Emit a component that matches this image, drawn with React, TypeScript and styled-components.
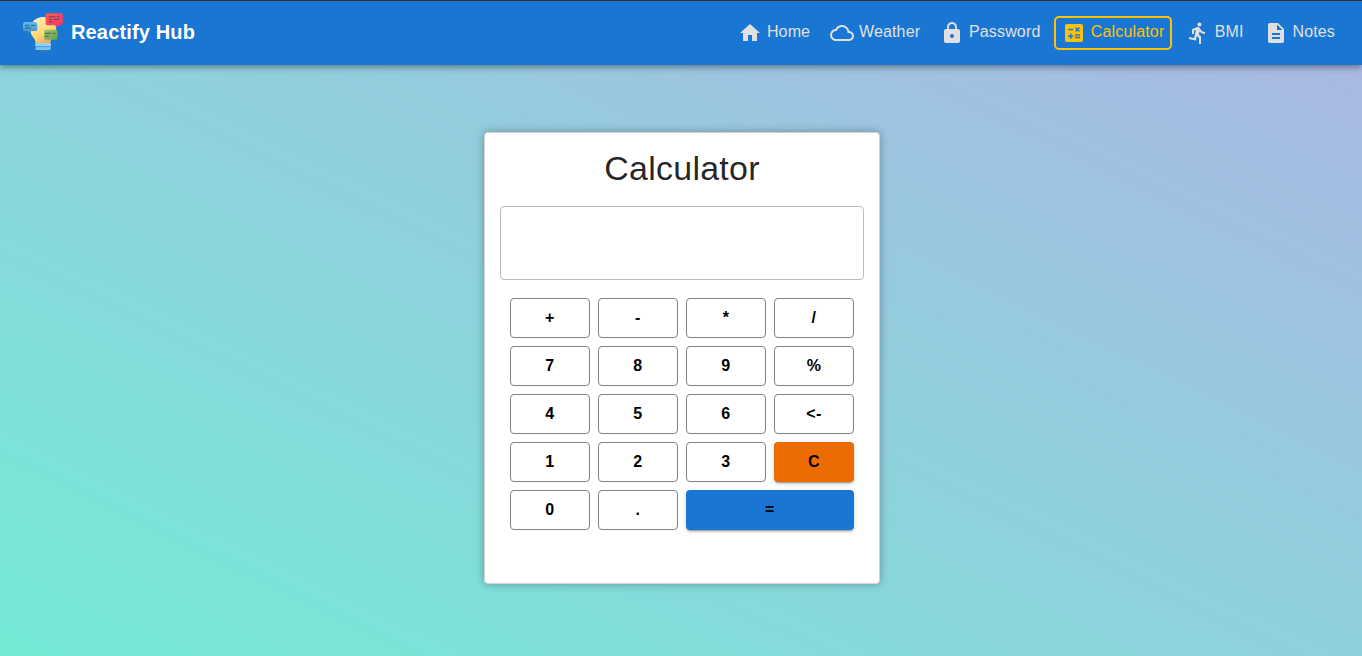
import React from "react";
import styled, { createGlobalStyle, css } from "styled-components";
import {
  MdCalculate,
  MdCloudQueue,
  MdDescription,
  MdDirectionsRun,
  MdHome,
  MdLock,
} from "react-icons/md";

const GlobalStyle = createGlobalStyle`
  *, *::before, *::after { box-sizing: border-box; }
  body {
    margin: 0;
    font-family: "Liberation Sans", Arial, sans-serif;
    font-size: 16px;
    -webkit-font-smoothing: antialiased;
  }
`;

const Page = styled.div`
  display: flex;
  flex-direction: column;
  height: 100vh;
  overflow: hidden;
  background: linear-gradient(to top right, #74ebd5, #acb6e5);
`;

const AppBar = styled.header`
  display: flex;
  align-items: center;
  justify-content: space-between;
  flex: none;
  height: 65px;
  padding: 0 19px 0 23px;
  border-top: 1px solid #2f3337;
  background: #1976d2;
  box-shadow: 0 2px 4px -1px rgba(0, 0, 0, 0.2), 0 4px 5px 0 rgba(0, 0, 0, 0.14),
    0 1px 10px 0 rgba(0, 0, 0, 0.12);
`;

const Brand = styled.div`
  display: flex;
  align-items: center;
  gap: 8px;
`;

const BrandName = styled.span`
  padding-bottom: 2px;
  color: #fff;
  font-size: 20px;
  font-weight: 700;
  line-height: 32px;
  letter-spacing: 0.15px;
`;

const Nav = styled.nav`
  display: flex;
  align-items: center;
  gap: 4.3px;
`;

const NavLink = styled.a<{ $active?: boolean }>`
  display: flex;
  align-items: center;
  gap: 4.5px;
  height: 34px;
  margin: 0 ${(p) => (p.$active ? "1.6px" : "0")};
  padding: 0 6px;
  border: 2px solid ${(p) => (p.$active ? "#ffc107" : "transparent")};
  border-radius: 5px;
  color: ${(p) => (p.$active ? "#ffc107" : "#e0e0e0")};
  line-height: 24px;
  letter-spacing: 0.15px;
  white-space: nowrap;

  svg {
    flex: none;
  }
`;

const NavLabel = styled.span`
  padding-bottom: 2px;
`;

const Main = styled.main`
  display: flex;
  flex: 1;
  justify-content: center;
  align-items: flex-start;
  padding: 67px 0 0 2px;
`;

const Card = styled.section`
  display: flex;
  flex-direction: column;
  align-items: center;
  width: 396px;
  height: 452px;
  padding: 14px 15px 15px;
  border: 1px solid #d3d3d3;
  border-radius: 4px;
  background: #fff;
  box-shadow: 0 0 10px rgba(0, 0, 0, 0.3);
`;

const Title = styled.h1`
  margin: 0 0 17px;
  color: rgba(0, 0, 0, 0.87);
  font-size: 34px;
  font-weight: 400;
  line-height: 42px;
  letter-spacing: 0.25px;
`;

const Display = styled.div`
  flex: none;
  width: 364px;
  height: 74px;
  border: 1px solid #bcbcbc;
  border-radius: 4px;
`;

const Keypad = styled.div`
  display: grid;
  grid-template-columns: repeat(4, 80px);
  grid-auto-rows: 40px;
  gap: 8px;
  margin-top: 18px;
`;

type Tone = "plain" | "warning" | "primary";

const raised = css`
  border: 0;
  box-shadow: 0 3px 1px -2px rgba(0, 0, 0, 0.2), 0 2px 2px 0 rgba(0, 0, 0, 0.14),
    0 1px 5px 0 rgba(0, 0, 0, 0.12);
`;

const Key = styled.button<{ $tone: Tone; $span: number }>`
  display: flex;
  align-items: center;
  justify-content: center;
  grid-column: span ${(p) => p.$span};
  padding: 0 0 1px;
  border: 1px solid #808080;
  border-radius: 4px;
  background: ${(p) =>
    p.$tone === "warning" ? "#ed6c02" : p.$tone === "primary" ? "#1976d2" : "#fff"};
  color: #000;
  font-family: inherit;
  font-size: 16px;
  font-weight: 700;
  letter-spacing: 0.457px;
  ${(p) => p.$tone !== "plain" && raised}
`;

const Logo = () => (
  <svg width="40" height="40" viewBox="0 0 40 40">
    <defs>
      <linearGradient id="bulb" x1="0.2" y1="0" x2="0.7" y2="1">
        <stop offset="0" stopColor="#fff0bd" />
        <stop offset="0.6" stopColor="#ffd778" />
        <stop offset="1" stopColor="#fba35c" />
      </linearGradient>
      <linearGradient id="red" x1="0" y1="0" x2="1" y2="1">
        <stop offset="0" stopColor="#fb5e4e" />
        <stop offset="1" stopColor="#f92f73" />
      </linearGradient>
      <linearGradient id="blue" x1="0" y1="0" x2="0" y2="1">
        <stop offset="0" stopColor="#66bdf0" />
        <stop offset="1" stopColor="#3a8fc9" />
      </linearGradient>
      <linearGradient id="green" x1="0" y1="0" x2="1" y2="1">
        <stop offset="0" stopColor="#a5c56c" />
        <stop offset="1" stopColor="#5d9f47" />
      </linearGradient>
    </defs>
    <path
      d="M20 4C13 4 7.200 9.500 7.200 16.200c0 4.300 2 7 4 9.600.9 1.300 1.300 2.600 1.300 4.500h15c0-2 .4-3.400 1.600-5 2.200-2.700 4.100-5 4.100-9.100C33.200 9.500 27 4 20 4z"
      fill="url(#bulb)"
    />
    <path d="M14 36h12.500c-.8 2.300-3.200 3.700-6.200 3.700S14.800 38.300 14 36z" fill="#347ba9" />
    <rect x="12.200" y="30" width="15.800" height="3.600" rx="1.300" fill="#8fd2fb" />
    <rect x="12.400" y="33.600" width="15.400" height="3.400" rx="1.300" fill="#78c3f4" />
    <path d="M13 33.600h14.200" stroke="#4b98d2" strokeWidth="0.7" />
    <path
      d="M24.500.3h13.300a2 2 0 0 1 2 2v7.900a2 2 0 0 1-2 2h-2.300l-2 2.200-1-2.200h-8a2 2 0 0 1-2-2V2.300a2 2 0 0 1 2-2z"
      fill="url(#red)"
    />
    <path
      d="M2 9h10.300a2 2 0 0 1 2 2v5a2 2 0 0 1-2 2H8.500l-3.300 2-.8-2H2a2 2 0 0 1-2-2v-5a2 2 0 0 1 2-2z"
      fill="url(#blue)"
    />
    <path
      d="M23 16.800h9.500a2 2 0 0 1 2 2v5.900a2 2 0 0 1-2 2h-8.300l-2 1.300-.6-2-.6-1v-6.200a2 2 0 0 1 2-2z"
      fill="url(#green)"
    />
    <g stroke="#324360" strokeWidth="0.9" strokeOpacity="0.85" fill="none">
      <path d="M26 3.700h6.500M34 3.700h2.200M26 6.300h3.300M31 6.300h5.200M26 8.800h3.500" />
      <path d="M2 12.300h4.500M8 12.300h4.300M2 15h6" />
      <path d="M22 20.300h6.500M30 20.300h2.500M22 23.200h3.800" />
    </g>
  </svg>
);

const links = [
  { label: "Home", Icon: MdHome },
  { label: "Weather", Icon: MdCloudQueue },
  { label: "Password", Icon: MdLock },
  { label: "Calculator", Icon: MdCalculate, active: true },
  { label: "BMI", Icon: MdDirectionsRun },
  { label: "Notes", Icon: MdDescription },
];

const keys: { label: string; tone?: Tone; span?: number }[] = [
  ..."+-*/789%456".split("").map((label) => ({ label })),
  { label: "<-" },
  { label: "1" },
  { label: "2" },
  { label: "3" },
  { label: "C", tone: "warning" },
  { label: "0" },
  { label: "." },
  { label: "=", tone: "primary", span: 2 },
];

export default function App() {
  return (
    <Page>
      <GlobalStyle />
      <AppBar>
        <Brand>
          <Logo />
          <BrandName>Reactify Hub</BrandName>
        </Brand>
        <Nav>
          {links.map(({ label, Icon, active }) => (
            <NavLink key={label} $active={active}>
              <Icon size={24} />
              <NavLabel>{label}</NavLabel>
            </NavLink>
          ))}
        </Nav>
      </AppBar>
      <Main>
        <Card>
          <Title>Calculator</Title>
          <Display />
          <Keypad>
            {keys.map(({ label, tone = "plain", span = 1 }) => (
              <Key key={label} type="button" $tone={tone} $span={span}>
                {label}
              </Key>
            ))}
          </Keypad>
        </Card>
      </Main>
    </Page>
  );
}
